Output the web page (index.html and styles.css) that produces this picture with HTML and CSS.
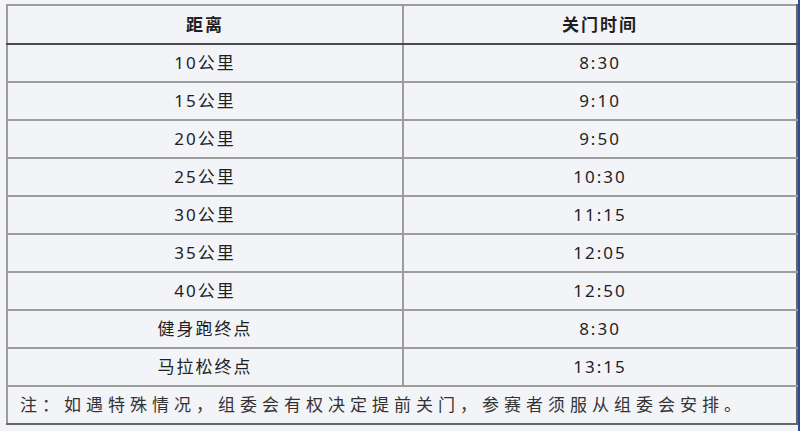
FILE: index.html
```html
<!DOCTYPE html>
<html lang="zh">
<head>
<meta charset="utf-8">
<link rel="stylesheet" href="styles.css">
</head>
<body>
<table class="cutoff">
  <thead>
    <tr><th>距离</th><th>关门时间</th></tr>
  </thead>
  <tbody>
    <tr><td>10公里</td><td>8:30</td></tr>
    <tr><td>15公里</td><td>9:10</td></tr>
    <tr><td>20公里</td><td>9:50</td></tr>
    <tr><td>25公里</td><td>10:30</td></tr>
    <tr><td>30公里</td><td>11:15</td></tr>
    <tr><td>35公里</td><td>12:05</td></tr>
    <tr><td>40公里</td><td>12:50</td></tr>
    <tr><td>健身跑终点</td><td>8:30</td></tr>
    <tr><td>马拉松终点</td><td>13:15</td></tr>
    <tr><td class="note" colspan="2">注：如遇特殊情况，组委会有权决定提前关门，参赛者须服从组委会安排。</td></tr>
  </tbody>
</table>
</body>
</html>
```
FILE: styles.css
```css
html, body {
  margin: 0;
  background: #f3f4f8;
}
body {
  padding: 4px 0 0 6px;
  border-right: 2px solid #2c4a9a;
  height: 431px;
  box-sizing: border-box;
  font-family: "Noto Sans", "Noto Sans CJK SC", sans-serif;
  color: #1f1f1f;
}
.cutoff {
  width: 792px;
  border-collapse: collapse;
  table-layout: fixed;
  font-size: 17px;
  letter-spacing: 2px;
  border-top: 2px solid #a0a0a0;
  border-left: 2px solid #a0a0a0;
  border-right: 2px solid #666;
  border-bottom: 2px solid #666;
}
.cutoff th, .cutoff td {
  text-align: center;
  border: 2px solid #9c9c9c;
  height: 36px;
  padding: 0;
  line-height: 20px;
}
.cutoff th:first-child, .cutoff td:first-child {
  width: 394px;
}
.cutoff th {
  font-weight: 700;
  border-bottom: 2px solid #4a4a4a;
  height: 37px;
}
.cutoff tr > :last-child {
  border-right: 2px solid #666;
}
.cutoff td.note {
  text-align: left;
  padding-left: 12px;
  letter-spacing: 5px;
  color: #333;
  border-bottom: 2px solid #666;
}
```
